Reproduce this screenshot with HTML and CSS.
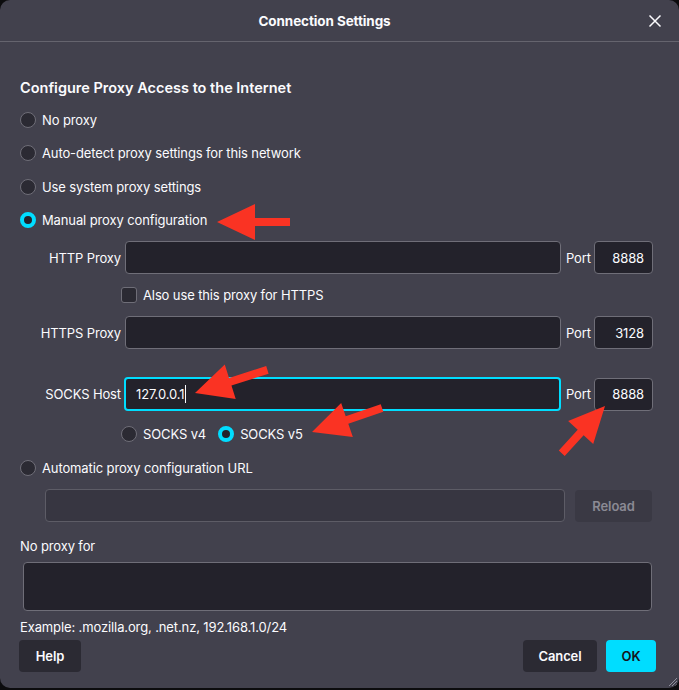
FILE: index.html
```html
<!DOCTYPE html>
<html>
<head>
<meta charset="utf-8">
<link rel="stylesheet" href="styles.css">
</head>
<body>
<div class="dialog">
  <div class="header">
    <span class="title">Connection Settings</span>
    <svg class="close" width="14" height="14" viewBox="0 0 14 14"><path d="M1.5 1.5 L12.5 12.5 M12.5 1.5 L1.5 12.5" stroke="#fbfbfe" stroke-width="1.5" fill="none"/></svg>
  </div>
  <div class="content">
    <h2 class="section-title">Configure Proxy Access to the Internet</h2>
    <div class="radios">
      <div class="row"><span class="radio"></span><span>No proxy</span></div>
      <div class="row"><span class="radio"></span><span>Auto-detect proxy settings for this network</span></div>
      <div class="row"><span class="radio"></span><span>Use system proxy settings</span></div>
      <div class="row"><span class="radio checked"></span><span>Manual proxy configuration</span></div>
    </div>
    <div class="proxy-grid">
      <span class="flabel">HTTP Proxy</span>
      <div class="field"></div>
      <span class="plabel">Port</span>
      <div class="field port">8888</div>

      <div class="subrow check-row"><span class="checkbox"></span><span>Also use this proxy for HTTPS</span></div>

      <span class="flabel">HTTPS Proxy</span>
      <div class="field"></div>
      <span class="plabel">Port</span>
      <div class="field port">3128</div>

      <span class="flabel socks-gap">SOCKS Host</span>
      <div class="field focused socks-gap"><span class="val">127.0.0.1</span><span class="caret"></span></div>
      <span class="plabel socks-gap">Port</span>
      <div class="field port socks-gap">8888</div>

      <div class="subrow socks-row">
        <span class="row small"><span class="radio"></span><span>SOCKS v4</span></span>
        <span class="row small v5"><span class="radio checked"></span><span>SOCKS v5</span></span>
      </div>
    </div>
    <div class="row auto-row"><span class="radio"></span><span>Automatic proxy configuration URL</span></div>
    <div class="url-row">
      <div class="field disabled"></div>
      <div class="btn reload">Reload</div>
    </div>
    <div class="noproxy-label">No proxy for</div>
    <div class="textarea"></div>
    <div class="example">Example: .mozilla.org, .net.nz, 192.168.1.0/24</div>
    <div class="footer">
      <div class="btn">Help</div>
      <div class="spacer"></div>
      <div class="btn">Cancel</div>
      <div class="btn primary">OK</div>
    </div>
  </div>
  <svg class="grip" width="12" height="12" viewBox="0 0 12 12"><path d="M11 3 L3 11 M11 6 L6 11 M11 9 L9 11" stroke="#8f8f9d" stroke-width="1"/></svg>
  <svg class="arrows" width="679" height="690" viewBox="0 0 679 690">
    <g fill="#fa3323">
      <polygon transform="translate(217 222)" points="0,0 38,-18 38,-4 73,-4 73,4 38,4 38,18"/>
      <polygon transform="translate(195 393) rotate(-17.7)" points="0,0 37,-18 37,-4 76,-4 76,4 37,4 37,18"/>
      <polygon transform="translate(312 432) rotate(-18.9)" points="0,0 37,-18 37,-4 74,-4 74,4 37,4 37,18"/>
      <polygon transform="translate(605 406) rotate(132.5)" points="0,0 36,-17 36,-4 64,-4 64,4 36,4 36,17"/>
    </g>
  </svg>
</div>
</body>
</html>
```

FILE: styles.css
```css
* { box-sizing: border-box; }
html, body {
  margin: 0;
  padding: 0;
  background: #0c0c0e;
}
body {
  width: 679px;
  height: 690px;
  font-family: "Inter", "Noto Sans", sans-serif;
  font-size: 13px;
  letter-spacing: -0.12px;
  color: #fbfbfe;
}
.dialog {
  position: relative;
  width: 679px;
  height: 688px;
  background: #42414d;
  border-radius: 10px;
  overflow: hidden;
}
.header {
  position: relative;
  height: 42px;
  border-bottom: 1px solid #65646e;
  display: flex;
  align-items: center;
  justify-content: center;
  padding-right: 30px;
}
.title {
  font-weight: 700;
  font-size: 13.5px;
  letter-spacing: -0.1px;
}
.close {
  position: absolute;
  right: 17px;
  top: 14px;
}
.content {
  padding: 0 0 0 20px;
}
.section-title {
  margin: 36px 0 0 0;
  font-size: 14.5px;
  font-weight: 600;
  line-height: 20px;
  letter-spacing: 0;
}
.radios {
  margin-top: 12px;
  display: flex;
  flex-direction: column;
  gap: 13.4px;
}
.row {
  display: flex;
  align-items: center;
  height: 20px;
  gap: 6px;
}
.radio {
  flex: none;
  width: 16px;
  height: 16px;
  border-radius: 50%;
  background: #2b2a33;
  border: 1px solid #6f6e78;
}
.radio.checked {
  border: 4px solid #00ddff;
  background: #23222b;
}
.checkbox {
  flex: none;
  width: 16px;
  height: 16px;
  border-radius: 3px;
  background: #2b2a33;
  border: 1px solid #6f6e78;
}
.proxy-grid {
  margin-top: 11px;
  display: grid;
  grid-template-columns: 101px 436px 24px 59px;
  column-gap: 4px;
  row-gap: 11px;
  align-items: center;
}
.proxy-grid .plabel { margin-left: 1px; }
.flabel {
  text-align: right;
  white-space: nowrap;
}
.field {
  height: 33px;
  border: 1px solid #6f6e78;
  border-radius: 4px;
  background: #23222b;
  display: flex;
  align-items: center;
  padding: 0 8px;
}
.field.port {
  justify-content: flex-end;
  margin-left: 1px;
  width: 59px;
}
.field.focused {
  border: 2px solid #00ddff;
  margin-left: -1px;
  height: 34px;
  padding-left: 10px;
}
.caret {
  display: inline-block;
  width: 1px;
  height: 18px;
  background: #fbfbfe;
  margin-left: 1px;
}
.socks-gap { margin-top: 17px; }
.subrow {
  grid-column: 2 / 5;
  margin-left: -4px;
  display: flex;
  align-items: center;
  height: 20px;
  gap: 6px;
}
.socks-row {
  margin-top: 2px;
  gap: 12px;
}
.row.small { gap: 6px; }
.auto-row { margin-top: 14px; }
.url-row {
  margin-top: 11px;
  margin-left: 25px;
  display: flex;
  gap: 10px;
}
.field.disabled {
  width: 520px;
  background: #373641;
  border-color: #5d5c66;
}
.btn {
  height: 32px;
  border-radius: 4px;
  background: #2b2a33;
  font-weight: 600;
  display: flex;
  align-items: center;
  justify-content: center;
  padding: 0 14px;
}
.reload {
  width: 77px;
  height: 32px;
  margin-top: 1px;
  background: #3a3944;
  color: #8b8a94;
}
.noproxy-label {
  margin-top: 14px;
  height: 20px;
  line-height: 20px;
}
.textarea {
  margin-top: 6px;
  margin-left: 3px;
  width: 629px;
  height: 49px;
  border: 1px solid #6f6e78;
  border-radius: 4px;
  background: #23222b;
}
.example {
  margin-top: 6px;
  height: 20px;
  line-height: 20px;
}
.footer {
  margin-top: 3px;
  margin-left: -1px;
  width: 637px;
  display: flex;
  gap: 9px;
}
.spacer { flex: 1; }
.footer .btn:first-child { width: 62px; }
.footer .btn:nth-child(3) { width: 74px; }
.btn.primary {
  width: 50px;
  background: #00ddff;
  color: #15141a;
}
.grip {
  position: absolute;
  right: 1px;
  bottom: 1px;
}
.arrows {
  position: absolute;
  left: 0;
  top: 0;
  pointer-events: none;
}
```
